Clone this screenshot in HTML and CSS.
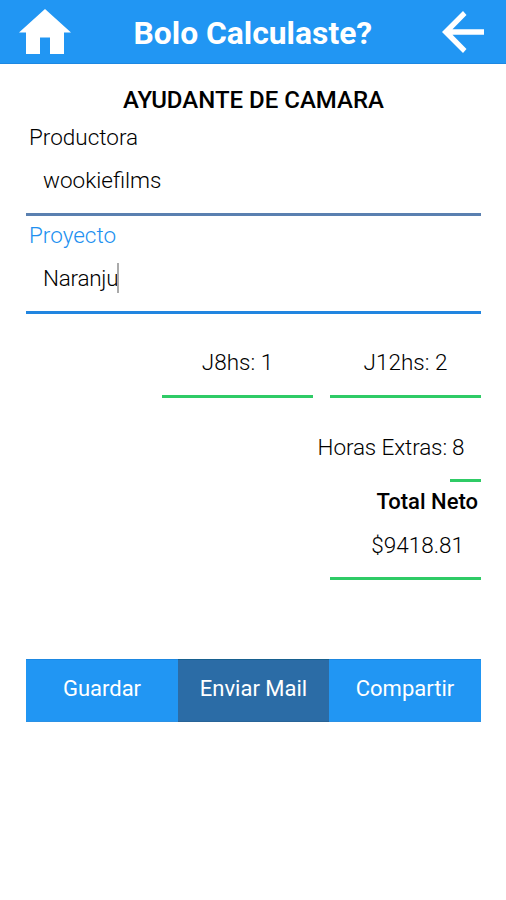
FILE: index.html
```html
<!DOCTYPE html>
<html lang="es">
<head>
<meta charset="utf-8">
<title>Bolo Calculaste?</title>
<link rel="stylesheet" href="styles.css">
</head>
<body>
<header class="bar">
<svg class="home" viewBox="0 0 52 45"><path d="M26 0 52 23.500H45V45H31V28.500H21V45H7V23.500H0Z"/></svg>
<h1>Bolo Calculaste?</h1>
<svg class="back" viewBox="0 0 42 42"><path d="M42 18.200H10.500L24.500 4 21 0 0 21 21 42 24.500 38 10.500 23.800H42Z"/></svg>
</header>
<main>
<h2>AYUDANTE DE CAMARA</h2>
<div class="field"><label>Productora</label><div class="value">wookiefilms</div></div>
<div class="field active"><label>Proyecto</label><div class="value">Naranju<i class="caret"></i></div></div>
<div class="days"><div class="cell">J8hs: 1</div><div class="cell">J12hs: 2</div></div>
<div class="extras"><span class="caption">Horas Extras:</span><span class="num">8</span></div>
<div class="total"><strong>Total Neto</strong><div class="amount">$9418.81</div></div>
<div class="actions"><button>Guardar</button><button class="pressed">Enviar Mail</button><button>Compartir</button></div>
</main>
</body>
</html>
```
FILE: styles.css
```css
*{box-sizing:border-box}
body{margin:0;background:#fff;color:#000;font:300 22.5px/28px Roboto,sans-serif;height:900px;overflow:hidden}
.bar{height:64px;background:#2196f3;display:flex;align-items:flex-start;padding:0 22px 0 19px;border-bottom:1px solid #1d88e2}
.bar svg{fill:#fff;display:block}
.home{width:52px;height:45px;margin-top:9px}
.back{width:42px;height:42px;margin:11px 0 0 auto}
h1{margin:13.4px 0 0 62.5px;font-size:31.8px;line-height:40px;color:#fff;font-weight:700}
main{padding:22px 25px 0 26px}
h2{margin:0;font-size:24px;line-height:28px;text-align:center;color:#000;font-weight:500}
.field{height:102px;border-bottom:3px solid #5a80b0;padding:9px 3px 0}
.active{height:98px;border-color:#2185e0;padding-top:5px}
.active label{color:#2190f0}
label{display:block;height:27px}
.value{padding:16px 0 0 14px;display:flex}
.active .value{letter-spacing:-.25px}
.caret{width:2px;height:30px;margin:-1px 0 0 -1px;background:#aaa}
.days{display:grid;grid-template-columns:151px 151px;gap:17px;justify-content:end;margin-top:20px}
.cell{height:64px;border-bottom:3px solid #2fcb66;text-align:center;padding-top:14px}
.extras{display:flex;justify-content:flex-end;gap:3px;height:84px;padding-top:35px}
.caption{letter-spacing:-.12px}
.num{width:31px;border-bottom:3px solid #2fcb66;padding-left:2px}
.total{width:151px;margin-left:auto;height:98px;border-bottom:3px solid #2fcb66;padding-top:5px;text-align:right}
.total strong{padding-right:3px;font-size:22px;font-weight:500}
.amount{padding:15px 17px 0 0}
.actions{display:grid;grid-template-columns:152px 151px 152px;margin-top:79px}
button{height:63px;border:0;border-top:1px solid #1d88e2;border-bottom:1px solid #2b91e5;background:#2196f3;color:#fff;font:400 22px/28px Roboto,sans-serif;padding:0 0 4px}
.pressed{background:#2b6ca6;border-top-color:#17608f;border-bottom-color:#286498}
```
